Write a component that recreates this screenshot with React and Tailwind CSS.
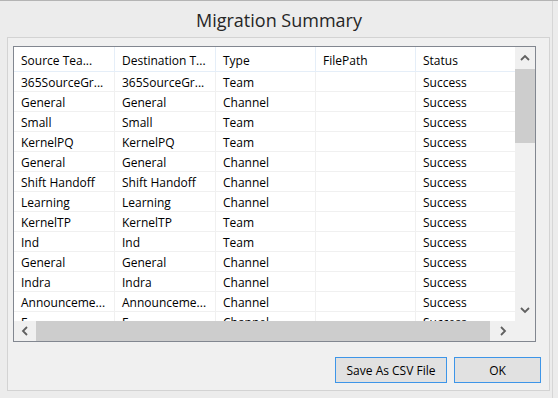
import React from "react";

const rows = [
  ["365SourceGr...", "365SourceGr...", "Team", "", "Success"],
  ["General", "General", "Channel", "", "Success"],
  ["Small", "Small", "Team", "", "Success"],
  ["KernelPQ", "KernelPQ", "Team", "", "Success"],
  ["General", "General", "Channel", "", "Success"],
  ["Shift Handoff", "Shift Handoff", "Channel", "", "Success"],
  ["Learning", "Learning", "Channel", "", "Success"],
  ["KernelTP", "KernelTP", "Team", "", "Success"],
  ["Ind", "Ind", "Team", "", "Success"],
  ["General", "General", "Channel", "", "Success"],
  ["Indra", "Indra", "Channel", "", "Success"],
  ["Announceme...", "Announceme...", "Channel", "", "Success"],
  ["E", "E", "Channel", "", "Success"],
];

const headers = ["Source Tea...", "Destination T...", "Type", "FilePath", "Status"];
const widths = ["w-[101px]", "w-[101px]", "w-[100px]", "w-[100px]", "w-[100px]"];

function Chevron({ dir }) {
  const paths = {
    up: "M1 6 L5 2 L9 6",
    down: "M1 2 L5 6 L9 2",
    left: "M6 1 L2 5 L6 9",
    right: "M2 1 L6 5 L2 9",
  };
  const vertical = dir === "up" || dir === "down";
  return (
    <svg
      width={vertical ? 10 : 8}
      height={vertical ? 8 : 10}
      viewBox={vertical ? "0 0 10 8" : "0 0 8 10"}
      fill="none"
      stroke="#606060"
      strokeWidth="1.8"
    >
      <path d={paths[dir]} />
    </svg>
  );
}

export default function App() {
  return (
    <div
      className="relative w-[558px] h-[398px] bg-[#ececec] border-t border-[#b4b4b4] overflow-hidden"
      style={{ fontFamily: '"Open Sans", "Noto Sans", sans-serif' }}
    >
      <div className="absolute right-[5px] top-0 bottom-0 w-px bg-[#d6d6d6]" />
      <div className="h-[36px] flex items-center justify-center text-[18px] text-[#262626] pt-[3px]">
        Migration Summary
      </div>
      <div className="ml-[7px] w-[543px] h-[354px] border border-[#d3d3d3] bg-[#f0f0f0] pt-[8px] pl-[5px]">
        <div className="w-[523px] h-[296px] border border-[#828790] bg-white flex flex-col">
          <div className="flex h-[274px]">
            <div className="w-[501px] h-[274px] overflow-hidden text-[12px] text-black">
              <div className="flex h-[25px] border-b border-[#e5eef8]">
                {headers.map((h, i) => (
                  <div
                    key={i}
                    className={`${widths[i]} shrink-0 h-full flex items-center pl-[7px] pt-[4px] border-r border-[#e5eef8] whitespace-nowrap`}
                  >
                    {h}
                  </div>
                ))}
              </div>
              {rows.map((r, ri) => (
                <div key={ri} className="flex h-[20px] border-b border-[#f0f0f0]">
                  {r.map((c, ci) => (
                    <div
                      key={ci}
                      className={`${widths[ci]} shrink-0 h-full flex items-center pl-[7px] pt-[3px] border-r border-[#f0f0f0] whitespace-nowrap overflow-hidden`}
                    >
                      {c}
                    </div>
                  ))}
                </div>
              ))}
            </div>
            <div className="w-[20px] h-[274px] bg-[#f0f0f0] flex flex-col">
              <div className="h-[22px] flex items-center justify-center">
                <Chevron dir="up" />
              </div>
              <div className="h-[74px] bg-[#cdcdcd]" />
              <div className="flex-1" />
              <div className="h-[22px] flex items-center justify-center">
                <Chevron dir="down" />
              </div>
            </div>
          </div>
          <div className="flex h-[20px] bg-[#f0f0f0]">
            <div className="w-[22px] flex items-center justify-center">
              <Chevron dir="left" />
            </div>
            <div className="w-[454px] bg-[#cdcdcd]" />
            <div className="w-[25px] flex items-center justify-center">
              <Chevron dir="right" />
            </div>
            <div className="flex-1 bg-[#f0f0f0]" />
          </div>
        </div>
        <div className="flex justify-end gap-[7px] mt-[15px] pr-[8px] text-[12px] text-black">
          <button className="w-[112px] h-[26px] border border-[#3d95e8] bg-[#e1e1e1] flex items-center justify-center pt-[1px]">
            Save As CSV File
          </button>
          <button className="w-[87px] h-[26px] border border-[#3d95e8] bg-[#e1e1e1] flex items-center justify-center pt-[1px]">
            OK
          </button>
        </div>
      </div>
    </div>
  );
}
